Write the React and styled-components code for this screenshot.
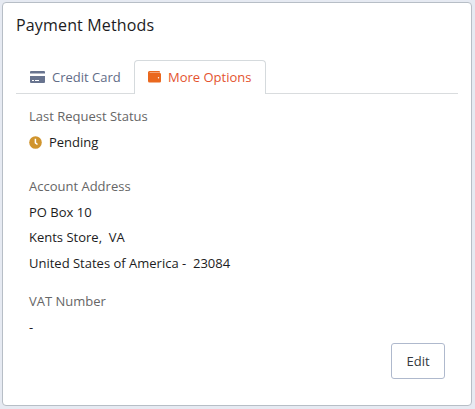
import React from "react";
import styled, { createGlobalStyle } from "styled-components";

const GlobalStyle = createGlobalStyle`
  * { box-sizing: border-box; }
  body {
    margin: 0;
    background: #e6eaf2;
    color: #1c1c22;
    font: 13px/20px "Open Sans", "Noto Sans", sans-serif;
  }
`;

const Page = styled.main`
  display: flex;
  height: 409px;
  padding: 2px 3px 3px 2px;
`;

const Card = styled.section`
  flex: 1;
  display: flex;
  flex-direction: column;
  padding: 0 13px;
  background: #fff;
  border: 1px solid #b7bec6;
  border-radius: 4px;
`;

const Title = styled.h1`
  margin: 10px 0 23px;
  font-size: 16px;
  line-height: 24px;
  font-weight: 400;
  letter-spacing: 0.16px;
`;

const Tabs = styled.nav`
  display: flex;
  height: 34px;
  border-bottom: 1px solid #d9dcde;
`;

const Tab = styled.button`
  display: flex;
  align-items: center;
  width: ${(p) => p.$width}px;
  height: 34px;
  padding: ${(p) => (p.$active ? "0 0 1px 13px" : "0 0 0 14px")};
  gap: ${(p) => (p.$active ? 7 : 6)}px;
  font: inherit;
  white-space: nowrap;
  color: ${(p) => (p.$active ? "#e4532f" : "#626c87")};
  background: ${(p) => (p.$active ? "#fff" : "none")};
  border: ${(p) => (p.$active ? "1px solid #d5dadd" : "0")};
  border-bottom: 0;
  border-radius: 4px 4px 0 0;
`;

const Details = styled.div`
  display: flex;
  flex-direction: column;
  padding: 12px 13px 0;
`;

const Label = styled.div`
  color: #666;
  margin-top: ${(p) => p.$gap || 0}px;
`;

const Line = styled.div`
  display: flex;
  align-items: center;
  gap: 7px;
  height: 20px;
  margin-top: ${(p) => p.$gap}px;
  white-space: pre;
`;

const Actions = styled.footer`
  display: flex;
  justify-content: flex-end;
  padding: 6px 13px 0;
`;

const EditButton = styled.button`
  width: 54px;
  height: 36px;
  padding: 0;
  font: inherit;
  color: #34393e;
  background: #fff;
  border: 1px solid #afb9cd;
  border-radius: 3px;
`;

const Icon = styled.svg`
  display: block;
  flex: none;
`;

const CardIcon = () => (
  <Icon width="16" height="12" viewBox="0 0 16 12">
    <path
      fill="#68748f"
      fillRule="evenodd"
      d="M1 0h13q1 0 1 1v1.500H0V1q0-1 1-1zM0 5h15v6q0 1-1 1H1q-1 0-1-1zM2 9v1h2V9zM5 9v1h4V9z"
    />
  </Icon>
);

const WalletIcon = () => (
  <Icon width="13" height="12" viewBox="0 0 13 12">
    <path fill="#ea681e" d="M1.500 0h9.500q1 0 1 1v1H0v-.5Q0 0 1.500 0z" />
    <path fill="#f6b48f" d="M1.500 1.100H12v.8H1.500z" />
    <path
      fill="#ea681e"
      fillRule="evenodd"
      d="M0 1.500h1.500v.4h10.200q1.300 0 1.300 1.300v7q0 1.300-1.300 1.300H1.500Q0 11.500 0 10zM10.500 6a.7.7 0 1 0 0 1.400.7.7 0 0 0 0-1.400z"
    />
  </Icon>
);

const ClockIcon = () => (
  <Icon width="13" height="13" viewBox="0 0 13 13">
    <circle cx="6.500" cy="6.500" r="6.300" fill="#d0942d" />
    <path d="M6.400 2.800v4L8.500 8.500" fill="none" stroke="#fff" strokeWidth="1.500" />
  </Icon>
);

export default function App() {
  return (
    <Page>
      <GlobalStyle />
      <Card>
        <Title>Payment Methods</Title>
        <Tabs>
          <Tab $width={118}><CardIcon />Credit Card</Tab>
          <Tab $active $width={132}><WalletIcon />More Options</Tab>
        </Tabs>
        <Details>
          <Label>Last Request Status</Label>
          <Line $gap={6}><ClockIcon />Pending</Line>
          <Label $gap={24}>Account Address</Label>
          <Line $gap={6}>PO Box 10</Line>
          <Line $gap={5}>Kents Store,{"  "}VA</Line>
          <Line $gap={6}>United States of America -{"  "}23084</Line>
          <Label $gap={18}>VAT Number</Label>
          <Line $gap={6}>-</Line>
        </Details>
        <Actions>
          <EditButton>Edit</EditButton>
        </Actions>
      </Card>
    </Page>
  );
}
